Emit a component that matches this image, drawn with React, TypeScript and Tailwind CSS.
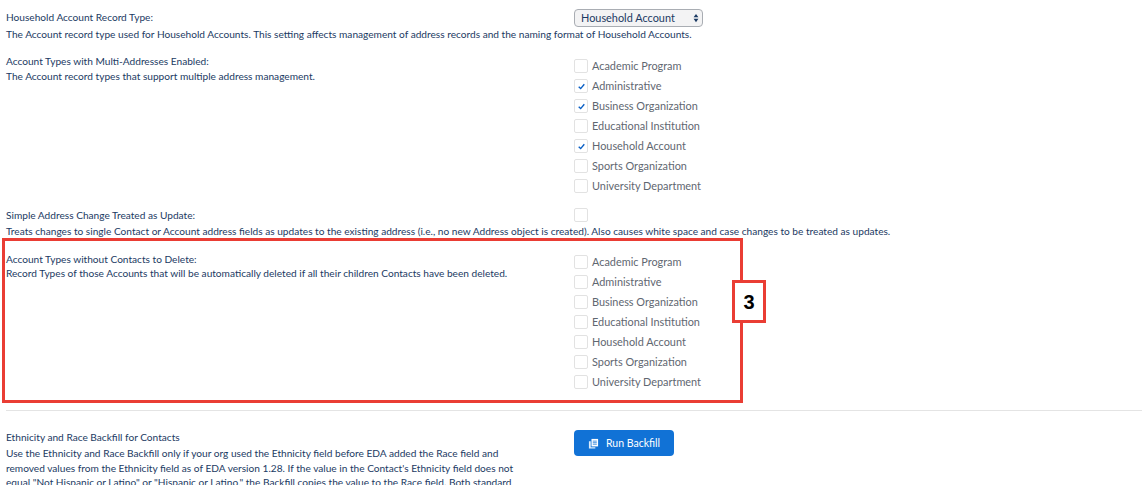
import React from 'react';

const accountTypes = [
  'Academic Program',
  'Administrative',
  'Business Organization',
  'Educational Institution',
  'Household Account',
  'Sports Organization',
  'University Department',
];

const CheckRow = ({ label, checked = false }: { label: string; checked?: boolean }) => (
  <div className="h-5 flex items-center gap-1">
    <div className="w-[14px] h-[14px] rounded-[2px] border border-[#e2e2e2] bg-white flex items-center justify-center">
      {checked && (
        <svg viewBox="0 0 10 10" className="w-[7px] h-[7px]">
          <path d="M1 5.5 L3.8 8 L9 1.8" fill="none" stroke="#0a5fc4" strokeWidth="2" />
        </svg>
      )}
    </div>
    <span className="text-[10.9px] text-[#5f6771]">{label}</span>
  </div>
);

const CheckList = ({ checked = [] }: { checked?: string[] }) => (
  <div className="flex flex-col">
    {accountTypes.map((t) => (
      <CheckRow key={t} label={t} checked={checked.includes(t)} />
    ))}
  </div>
);

export default function App() {
  return (
    <div className="relative w-[1148px] h-[485px] overflow-hidden bg-white pl-[6px] pr-[6px] font-['Lato',sans-serif] text-[10.15px] leading-[16px] text-[#1b3a63]">
      {/* Household account record type */}
      <div className="flex pt-[9px] h-[26px]">
        <div className="w-[568px]">Household Account Record Type:</div>
        <div className="w-[129px] h-[18px] rounded-[4px] border border-[#a9adb3] bg-[#f3f3f4] flex items-center justify-between pl-[6px] pr-[3px] text-[10.9px]">
          <span>Household Account</span>
          <svg viewBox="0 0 8 12" className="w-[6px] h-[10px]">
            <path d="M4 0.5 L7.2 5 H0.8 Z M4 11.5 L0.8 7 H7.2 Z" fill="#1b3a63" />
          </svg>
        </div>
      </div>
      <div>
        The Account record type used for Household Accounts. This setting affects management of address records and the naming format of Household Accounts.
      </div>

      {/* Multi-address types */}
      <div className="flex pt-[11px]">
        <div className="w-[568px]">
          <div>Account Types with Multi-Addresses Enabled:</div>
          <div className="-mt-[1px]">The Account record types that support multiple address management.</div>
        </div>
        <div className="pt-[3px]">
          <CheckList checked={['Administrative', 'Business Organization', 'Household Account']} />
        </div>
      </div>

      {/* Simple address change */}
      <div className="flex pt-[11px]">
        <div className="w-[568px]">Simple Address Change Treated as Update:</div>
        <div className="w-[14px] h-[14px] mt-[1px] rounded-[2px] border border-[#e2e2e2] bg-white" />
      </div>
      <div>
        Treats changes to single Contact or Account address fields as updates to the existing address (i.e., no new Address object is created). Also causes white space and case changes to be treated as updates.
      </div>

      {/* Account types without contacts */}
      <div className="flex pt-[12px]">
        <div className="w-[568px]">
          <div>Account Types without Contacts to Delete:</div>
          <div className="-mt-[2px]">Record Types of those Accounts that will be automatically deleted if all their children Contacts have been deleted.</div>
        </div>
        <div className="mt-[1px]">
          <CheckList />
        </div>
      </div>

      <div className="mt-[18px] border-t border-[#e4e4e4]" />

      {/* Backfill */}
      <div className="flex pt-[18px]">
        <div className="w-[568px]">
          <div className="leading-[17px]">Ethnicity and Race Backfill for Contacts</div>
          <div className="leading-[14.7px] w-[510px]">
            Use the Ethnicity and Race Backfill only if your org used the Ethnicity field before EDA added the Race field and removed values from the Ethnicity field as of EDA version 1.28. If the value in the Contact's Ethnicity field does not equal "Not Hispanic or Latino" or "Hispanic or Latino," the Backfill copies the value to the Race field. Both standard
          </div>
        </div>
        <div className="w-[100px] h-[26px] mt-[1px] rounded-[4px] bg-[#1172d6] flex items-center justify-center gap-[7px] text-white text-[10.5px]">
          <svg viewBox="0 0 12 12" className="w-[11px] h-[11px]">
            <path d="M1 3.5 H3 V10 H8 V11.5 H1 Z" fill="#dcebfa" />
            <path d="M3.8 1 H11 V9.2 H3.8 Z" fill="#ffffff" />
            <path d="M5.2 3.4 H9.6 M5.2 5.1 H9.6 M5.2 6.8 H9.6" stroke="#1172d6" strokeWidth="0.8" />
          </svg>
          <span>Run Backfill</span>
        </div>
      </div>

      {/* Annotation */}
      <div className="absolute left-[2px] top-[238px] w-[741px] h-[165px] border-[3px] border-[#ea3d34]" />
      <div className="absolute left-[732px] top-[280px] w-[34px] h-[43px] border-[3px] border-[#ea3d34] bg-white flex items-center justify-center font-['Liberation_Sans',sans-serif] font-bold text-[20px] text-black">
        3
      </div>
    </div>
  );
}
